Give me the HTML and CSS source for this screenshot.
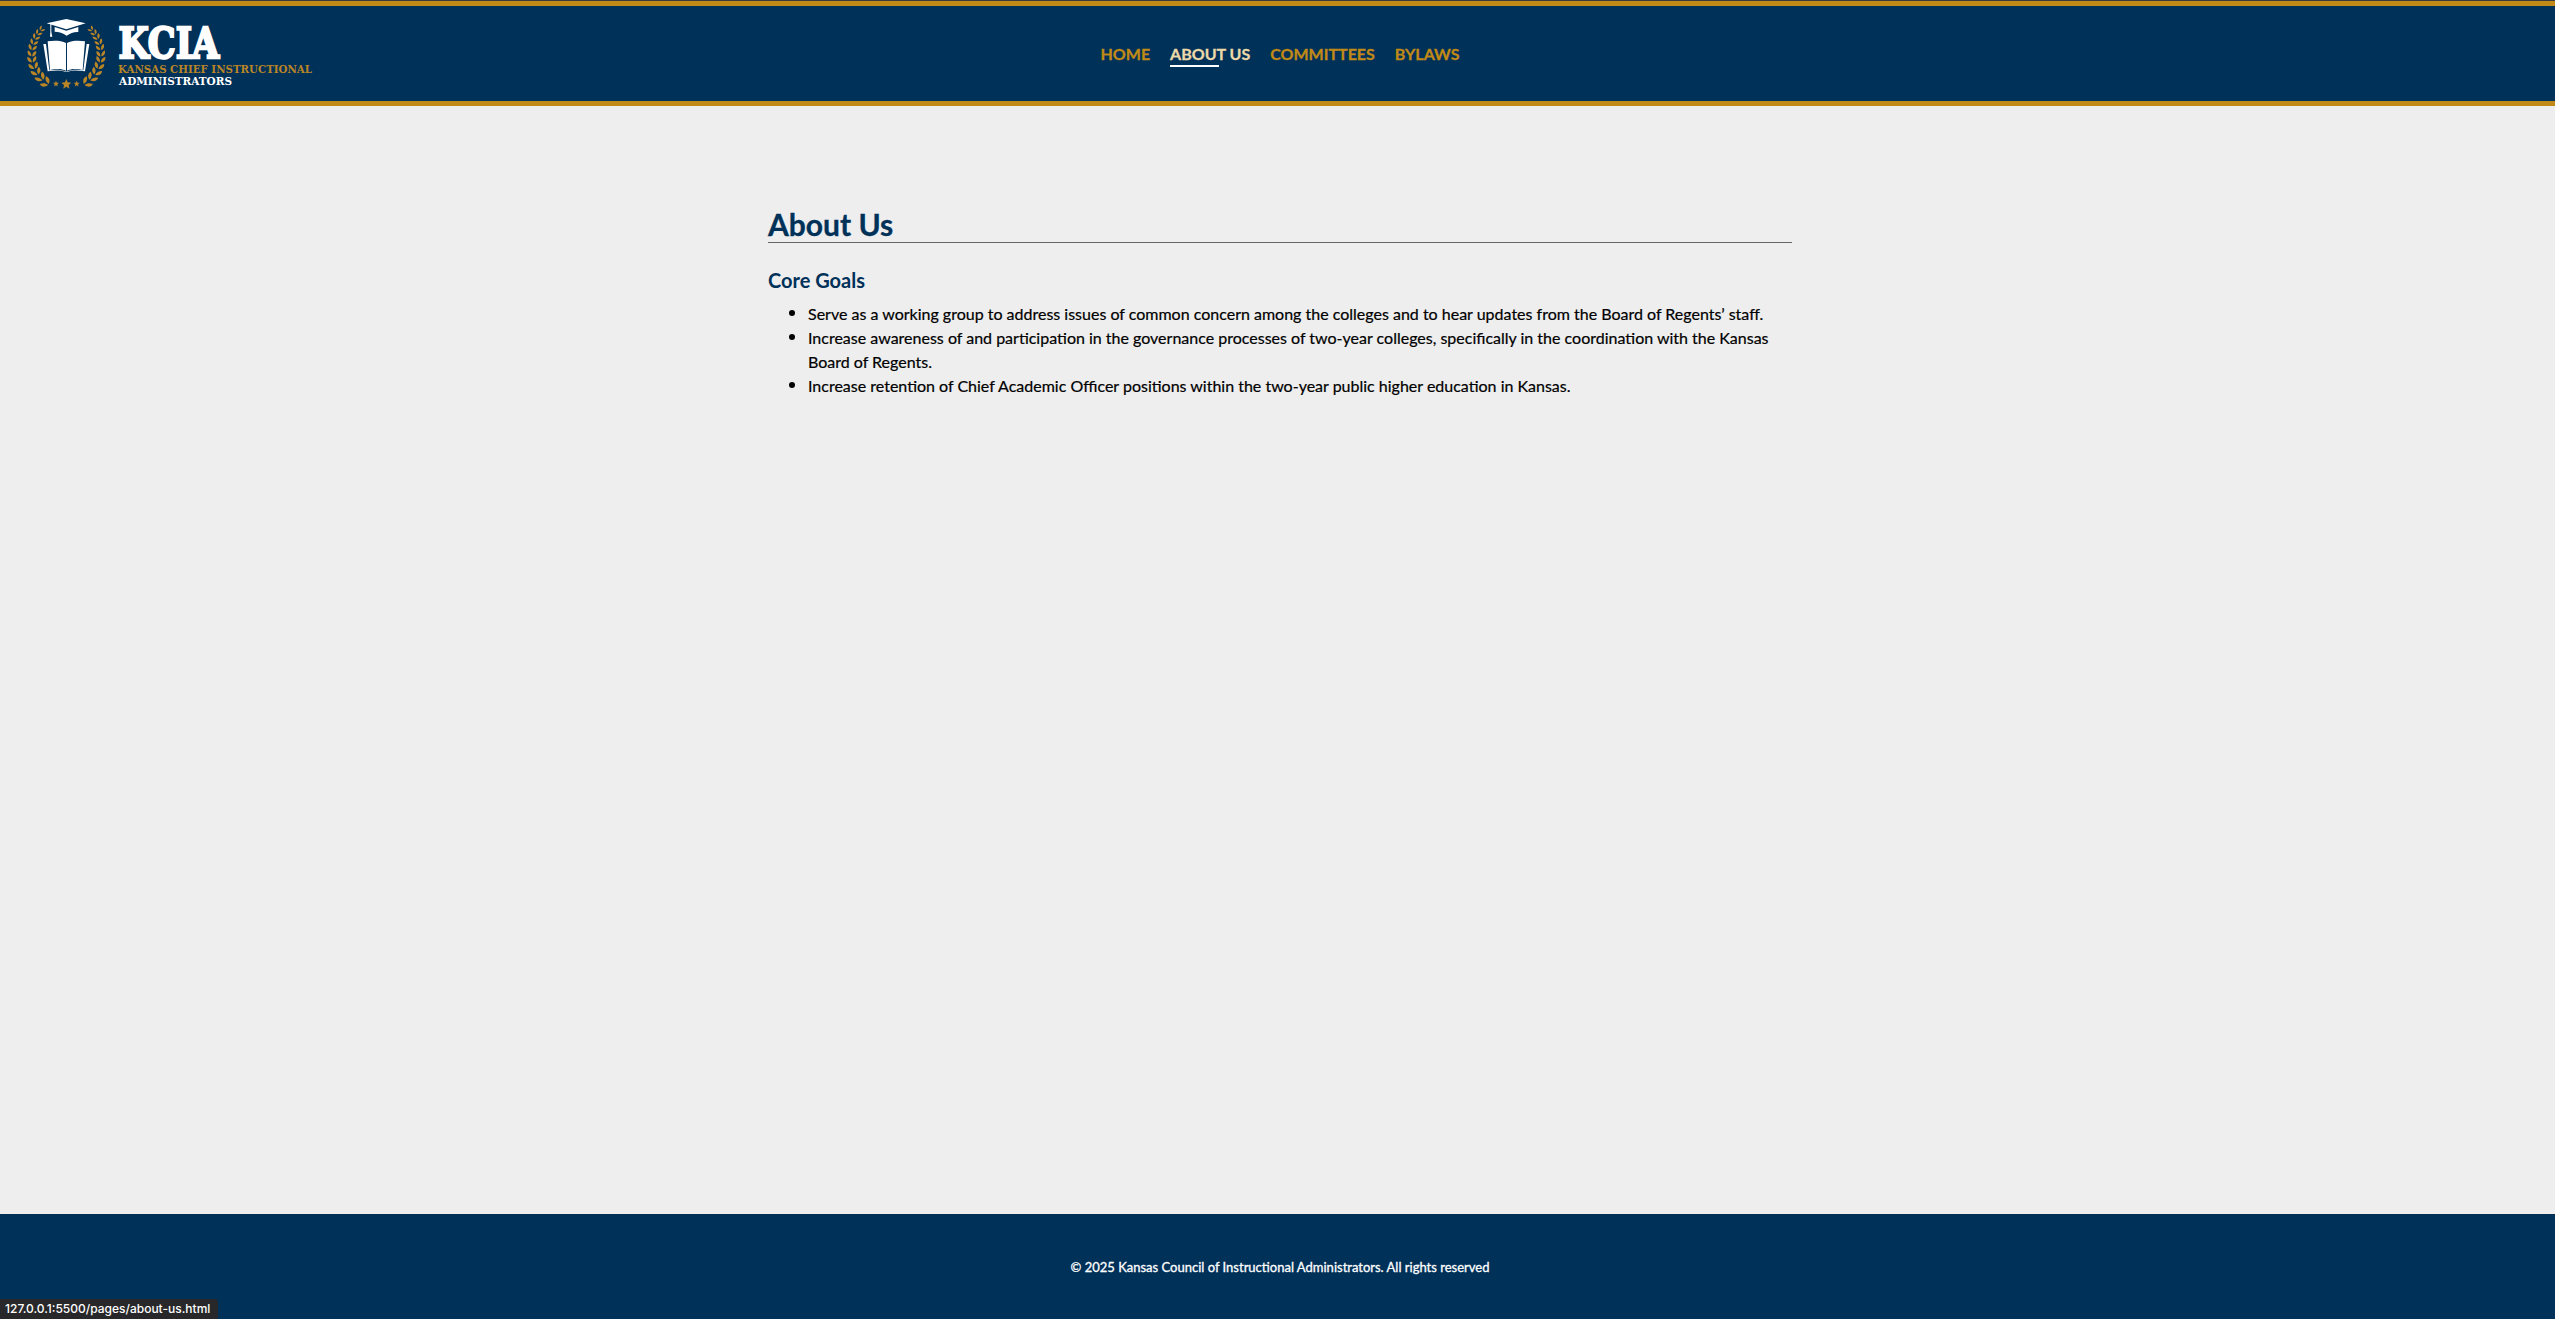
FILE: index.html
```html
<!DOCTYPE html>
<html lang="en">
<head>
<meta charset="utf-8">
<title>About Us | KCIA</title>
<link rel="stylesheet" href="styles.css">
</head>
<body>
<div class="page">
  <header class="header">
    <a class="logo">
      <svg width="300" height="84" viewBox="20 10 300 84" role="img" aria-label="KCIA">
        <defs>
          <g id="leaves">
            <path d="M-1 8C-11 5-14-3-11-11C-4-7 0 0-1 8Z"/>
            <path d="M2 8C12 5 14-3 12-10C4-7 1 0 2 8Z"/>
          </g>
          <g id="laurel">
            <use href="#leaves" transform="rotate(-53 139 137) translate(37 137) scale(1.3 1.15)"/>
            <use href="#leaves" transform="rotate(-41 139 137) translate(37 137) scale(1.25 1.15)"/>
            <use href="#leaves" transform="rotate(-29 139 137) translate(36 137) scale(1.2 1.1)"/>
            <use href="#leaves" transform="rotate(-18 139 137) translate(36 137) scale(1.15 1.05)"/>
            <use href="#leaves" transform="rotate(-7 139 137) translate(35 137) scale(1.1 1)"/>
            <use href="#leaves" transform="rotate(3 139 137) translate(35 137) scale(1.05 .95)"/>
            <use href="#leaves" transform="rotate(13 139 137) translate(34 137) scale(1 .9)"/>
            <use href="#leaves" transform="rotate(22 139 137) translate(33 137) scale(.95 .85)"/>
            <use href="#leaves" transform="rotate(31 139 137) translate(32 137) scale(.9 .8)"/>
            <use href="#leaves" transform="rotate(39 139 137) translate(31 137) scale(.8 .75)"/>
            <use href="#leaves" transform="rotate(47 139 137) translate(30 137) scale(.7)"/>
          </g>
          <path id="star" d="M0-15L4-5L15-4L7 3L9 14L0 8L-9 14L-7 3L-15-4L-4-5Z"/>
        </defs>
        <g transform="translate(20 10) scale(.3333)">
          <g class="gold">
            <use href="#laurel"/>
            <use href="#laurel" transform="translate(278 0) scale(-1 1)"/>
            <use href="#star" transform="translate(139 222)"/>
            <use href="#star" transform="translate(108 221) scale(.6)"/>
            <use href="#star" transform="translate(170 221) scale(.6)"/>
          </g>
          <g class="white">
            <path d="M80 40L139 27L197 40L139 58Z"/>
            <path d="M104 51L139 62L175 51V66C163 65 151 69 140 77C129 69 117 65 104 65Z"/>
            <path d="M91 42H94V66L97 80H90L91 66Z"/>
            <path d="M83 94C100 91 124 91 138 99V182C125 176 108 176 90 180Z"/>
            <path d="M195 94C178 91 155 91 141 99V182C153 176 170 176 188 180Z"/>
            <path d="M78 102H70L83 184C103 181 122 180 135 185H144C156 180 175 181 195 184L208 102H200L190 181C172 178 154 178 142 184H136C124 178 106 178 88 181Z"/>
          </g>
        </g>
        <text class="mark white" x="118.5" y="58.4" textLength="100.5" lengthAdjust="spacingAndGlyphs">KCIA</text>
        <text class="line gold" x="118" y="72.8" textLength="194" lengthAdjust="spacingAndGlyphs">KANSAS CHIEF INSTRUCTIONAL</text>
        <text class="line white" x="119" y="85.3" textLength="113" lengthAdjust="spacingAndGlyphs">ADMINISTRATORS</text>
      </svg>
    </a>
    <nav class="nav">
      <a>HOME</a>
      <a class="active">ABOUT US</a>
      <a>COMMITTEES</a>
      <a>BYLAWS</a>
    </nav>
  </header>
  <main class="content">
    <h1>About Us</h1>
    <h2>Core Goals</h2>
    <ul>
      <li>Serve as a working group to address issues of common concern among the colleges and to hear updates from the Board of Regents’ staff.</li>
      <li>Increase awareness of and participation in the governance processes of two-year colleges, specifically in the coordination with the Kansas Board of Regents.</li>
      <li>Increase retention of Chief Academic Officer positions within the two-year public higher education in Kansas.</li>
    </ul>
  </main>
  <footer class="footer">© 2025 Kansas Council of Instructional Administrators. All rights reserved</footer>
</div>
<div class="status">127.0.0.1:5500/pages/about-us.html</div>
</body>
</html>
```
FILE: styles.css
```css
* { box-sizing: border-box; }
html { overflow: hidden; }
body { margin: 0; overflow: hidden; font-family: Lato, Carlito, sans-serif; font-size: 16px; line-height: 24px; font-weight: 400; color: #000; background: #eee; }
.page { width: 2560px; height: 1319px; display: flex; flex-direction: column; border-top: 1px solid #3c3c3c; }
.header { height: 105px; flex: none; background: #003159; border-top: 5px solid #c18a17; border-bottom: 5px solid #c18a17; display: grid; grid-template-columns: 1fr auto 1fr; align-items: center; }
.logo { padding-left: 20px; height: 87px; }
.logo svg { display: block; overflow: visible; }
.gold { fill: #b98526; }
.white { fill: #fff; }
.mark { font: bold 42.5px "DejaVu Serif", serif; stroke: #fff; stroke-width: 2.4px; }
.line { font: bold 11.5px "DejaVu Serif", serif; }
.nav { display: flex; gap: 20px; font-weight: 700; color: #c18a17; -webkit-text-stroke: .3px; }
.nav a { position: relative; }
.nav .active { color: #ecd9a8; }
.nav .active::after { content: ""; position: absolute; left: 0; bottom: -1px; width: 49px; height: 2px; background: #fff; }
.content { width: 1024px; margin: 0 auto; flex: 1; padding-top: 100px; }
h1 { margin: 0; font-size: 30px; line-height: 36px; font-weight: 700; color: #003159; border-bottom: 1px solid #666; -webkit-text-stroke: .3px; }
h2 { margin: 23px 0 0; font-size: 20px; line-height: 28px; font-weight: 700; color: #003159; }
ul { margin: 8px 0 0; padding-left: 40px; list-style: none; -webkit-text-stroke: .2px; }
li { position: relative; }
li::before { content: ""; position: absolute; left: -19px; top: 8px; width: 6px; height: 6px; border-radius: 50%; background: #000; }
.footer { height: 105px; flex: none; background: #003159; color: #fff; font-size: 13px; display: flex; align-items: center; justify-content: center; -webkit-text-stroke: .3px; }
.status { position: absolute; left: 0; bottom: 0; width: 218px; height: 20px; padding-left: 5px; font: 500 12px/20px Inter, sans-serif; color: #fff; background: #28282a; border-top-right-radius: 3px; white-space: nowrap; }
```
